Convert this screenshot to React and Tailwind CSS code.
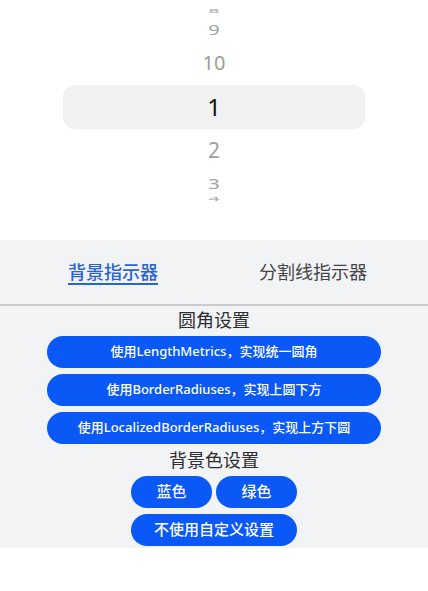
import { useState } from 'react'

const cjk = { fontFamily: '"Noto Sans CJK SC", "Noto Sans", sans-serif' }
const mixed = { fontFamily: '"Noto Sans", "Noto Sans CJK SC", sans-serif' }

function Wheel() {
  return (
    <div className="relative h-[240px] bg-white" style={mixed}>
      <div className="absolute left-[63px] top-[85px] w-[302px] h-[44px] rounded-[12px] bg-[#f1f1f1]" />
      <div className="relative flex flex-col items-center pt-[8px]">
        <div className="h-[11px] overflow-hidden flex items-start justify-center">
          <span className="block text-[20px] leading-[20px] text-[#a3a3a3] scale-y-[0.3] origin-top">8</span>
        </div>
        <div className="h-[22px] flex items-center justify-center">
          <span className="block text-[20px] leading-[20px] text-[#a0a0a0] scale-y-[0.68]">9</span>
        </div>
        <div className="h-[44px] flex items-center justify-center">
          <span className="block text-[20px] leading-[20px] text-[#9e9e9e]">10</span>
        </div>
        <div className="h-[44px] flex items-center justify-center">
          <span className="block text-[24px] leading-[24px] text-[#111]">1</span>
        </div>
        <div className="h-[43px] flex items-center justify-center">
          <span className="block text-[21px] leading-[21px] text-[#9e9e9e]">2</span>
        </div>
        <div className="h-[24px] flex items-center justify-center">
          <span className="block text-[20px] leading-[20px] text-[#a0a0a0] scale-y-[0.75]">3</span>
        </div>
        <div className="h-[9px] overflow-hidden flex items-start justify-center">
          <span className="block text-[20px] leading-[20px] text-[#a3a3a3] scale-y-[0.3] origin-top">4</span>
        </div>
      </div>
    </div>
  )
}

function Btn({ children, className = '' }) {
  return (
    <button
      className={`h-[32px] rounded-full bg-[#0a59f7] text-white font-medium ${className}`}
      style={mixed}
    >
      {children}
    </button>
  )
}

export default function App() {
  const [tab, setTab] = useState(0)
  const tabs = ['背景指示器', '分割线指示器']

  return (
    <div className="w-[428px] h-[591px] bg-white" style={cjk}>
      <Wheel />

      <div className="bg-[#f1f3f5] pb-[2px]">
        <div className="ml-[13px] w-[400px] h-[64px] flex">
          {tabs.map((t, i) => (
            <div key={t} className="flex-1 flex justify-center items-center" onClick={() => setTab(i)}>
              <div className="relative mb-[2px]">
                <span className={`block text-[18px] leading-[22px] ${tab === i ? 'text-[#2a63d4] font-medium' : 'text-[#454545]'}`}>
                  {t}
                </span>
                {tab === i && <div className="absolute left-0 right-0 -bottom-[3px] h-[2px] bg-[#2a63d4]" />}
              </div>
            </div>
          ))}
        </div>
        <div className="h-[1.5px] bg-[#cacaca]" />

        <div className="flex flex-col items-center">
          <div className="text-[18px] leading-[26px] text-[#2e2e2e] mb-[4px]">圆角设置</div>
          <div className="flex flex-col gap-[6px] w-[334px]">
            <Btn className="text-[13px]">使用LengthMetrics，实现统一圆角</Btn>
            <Btn className="text-[13px]">使用BorderRadiuses，实现上圆下方</Btn>
            <Btn className="text-[13px]">使用LocalizedBorderRadiuses，实现上方下圆</Btn>
          </div>

          <div className="text-[18px] leading-[26px] text-[#2e2e2e] mt-[2px] mb-[4px]">背景色设置</div>
          <div className="flex flex-col gap-[6px] w-[166px]">
            <div className="flex gap-[4px]">
              <Btn className="flex-1 text-[15px]">蓝色</Btn>
              <Btn className="flex-1 text-[15px]">绿色</Btn>
            </div>
            <Btn className="text-[15px]">不使用自定义设置</Btn>
          </div>
        </div>
      </div>
    </div>
  )
}
